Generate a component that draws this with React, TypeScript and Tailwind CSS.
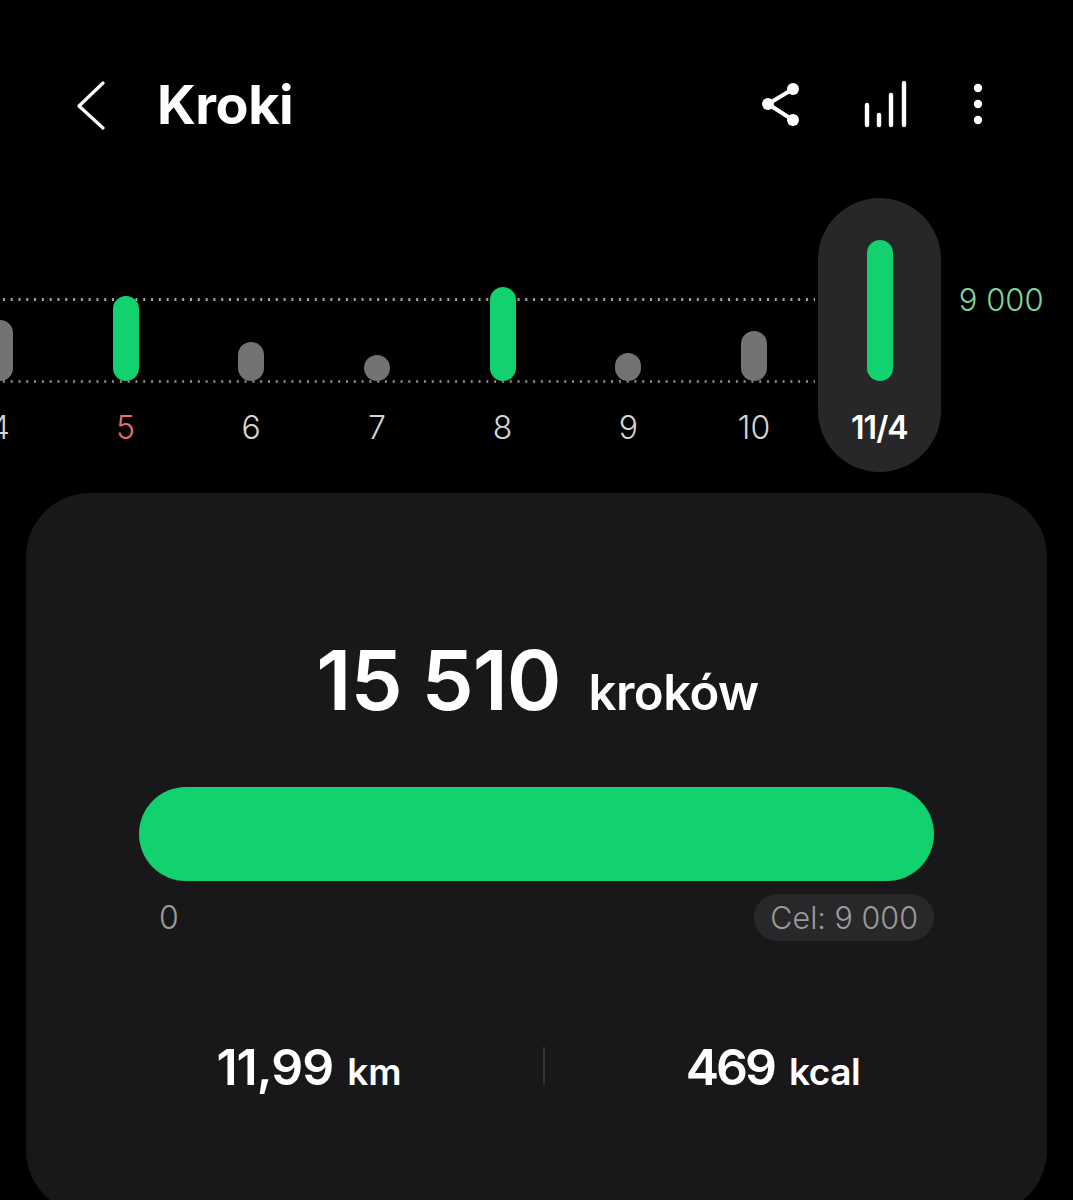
const days = [
  { label: "4", height: 61, goal: false },
  { label: "5", height: 85, goal: true, labelClass: "text-[#e4706c]" },
  { label: "6", height: 39, goal: false },
  { label: "7", height: 26, goal: false },
  { label: "8", height: 94, goal: true },
  { label: "9", height: 28, goal: false },
  { label: "10", height: 50, goal: false },
];

function ShareIcon() {
  return (
    <svg width="38" height="44" viewBox="0 0 38 44" fill="none" className="mt-[8px]">
      <path d="M6 22 L31 7 M6 22 L31 38" stroke="#fff" strokeWidth="4" />
      <circle cx="6" cy="22" r="6" fill="#fff" />
      <circle cx="31" cy="7" r="6" fill="#fff" />
      <circle cx="31" cy="38" r="6" fill="#fff" />
    </svg>
  );
}

function BarsIcon() {
  return (
    <svg width="43" height="50" viewBox="0 0 43 50" fill="none" stroke="#fff" strokeWidth="4.4" strokeLinecap="round" className="ml-[64px] mt-[5px]">
      <path d="M3 26 V46 M15 36 V46 M27 16 V46 M40 4 V46" />
    </svg>
  );
}

function DotsIcon() {
  return (
    <svg width="16" height="48" viewBox="0 0 16 48" fill="#fff" className="ml-[63px] mt-[6px]">
      <circle cx="8" cy="8" r="4.2" />
      <circle cx="8" cy="24" r="4.2" />
      <circle cx="8" cy="40" r="4.2" />
    </svg>
  );
}

function Bar({ height, goal }: { height: number; goal: boolean }) {
  return (
    <div
      className={goal ? "w-[26px] rounded-full bg-[#12d16f]" : "w-[26px] rounded-full bg-[#737373]"}
      style={{ height }}
    />
  );
}

export default function App() {
  return (
    <div className="flex h-[1200px] flex-col overflow-hidden bg-black font-['Inter',sans-serif] text-white">
      <header className="flex h-[198px] shrink-0 items-start pl-[76px] pr-[87px] pt-[74px]">
        <svg width="30" height="50" viewBox="0 0 30 50" fill="none" stroke="#fff" strokeWidth="3.2" strokeLinecap="round" strokeLinejoin="round" className="mt-[6px]">
          <path d="M27 3 L3 26 L27 48" />
        </svg>
        <h1 className="ml-[51px] text-[54px] leading-[62px] font-bold tracking-[-0.5px]">Kroki</h1>
        <div className="ml-auto flex items-start">
          <ShareIcon />
          <BarsIcon />
          <DotsIcon />
        </div>
      </header>

      <section className="relative flex h-[274px] shrink-0">
        <div className="absolute left-0 top-[100px] h-[3px] w-[815px] bg-[radial-gradient(circle,#a8a8a8_1.1px,transparent_1.5px)] bg-[length:7.8px_3px]" />
        <div className="absolute left-0 top-[182px] h-[3px] w-[815px] bg-[radial-gradient(circle,#808080_1.1px,transparent_1.5px)] bg-[length:7.8px_3px]" />
        <div className="relative ml-[-63px] flex">
          {days.map((d) => (
            <div key={d.label} className="flex w-[125.7px] flex-col items-center">
              <div className="flex h-[183px] items-end">
                <Bar height={d.height} goal={d.goal} />
              </div>
              <span className={`mt-[28px] text-[32px] leading-[38px] font-light ${d.labelClass ?? "text-[#d4d4d4]"}`}>
                {d.label}
              </span>
            </div>
          ))}
        </div>
        <div className="relative ml-[1px] flex h-[274px] w-[123px] flex-col items-center rounded-full bg-[#272729]">
          <div className="ml-[1px] mt-[42px] h-[141px] w-[26px] rounded-full bg-[#12d16f]" />
          <span className="mt-[28px] text-[32px] leading-[38px] font-semibold tracking-[-1px]">11/4</span>
        </div>
        <span className="ml-[18px] mt-[83px] text-[31px] leading-[38px] font-light text-[#7fd49a]">9 000</span>
      </section>

      <main className="mx-[26px] mt-[21px] h-[721px] shrink-0 rounded-[64px] bg-[#18181a] px-[51px] pt-[142px]">
        <div className="flex items-baseline justify-center pl-[2px]">
          <span className="text-[83px] leading-[90px] font-semibold tracking-[-1px]">15 510</span>
          <span className="ml-[28px] text-[49px] leading-[60px] font-semibold tracking-[-0.5px]">kroków</span>
        </div>
        <div className="mx-[62px] mt-[62px] h-[94px] rounded-full bg-[#12d16f]" />
        <div className="mx-[62px] mt-[13px] flex items-center justify-between">
          <span className="pl-[20px] text-[32px] leading-[38px] font-light text-[#9a9a9a]">0</span>
          <span className="flex h-[47px] items-center rounded-full bg-[#28282a] px-[16px] text-[30.5px] font-light text-[#9a9a9a]">
            Cel: 9 000
          </span>
        </div>
        <div className="mt-[96px] flex items-center">
          <div className="flex w-[466px] shrink-0 items-baseline justify-center pr-[2px]">
            <span className="text-[50px] font-semibold leading-[60px] tracking-[-1px]">11,99</span>
            <span className="ml-[14px] text-[37px] font-semibold">km</span>
          </div>
          <div className="mt-[-4px] h-[38px] w-[2px] shrink-0 bg-[#333335]" />
          <div className="flex w-[456px] shrink-0 items-baseline justify-center">
            <span className="text-[50px] font-semibold leading-[60px] tracking-[-3px]">469</span>
            <span className="ml-[15px] text-[37px] font-semibold tracking-[-0.5px]">kcal</span>
          </div>
        </div>
      </main>
    </div>
  );
}
